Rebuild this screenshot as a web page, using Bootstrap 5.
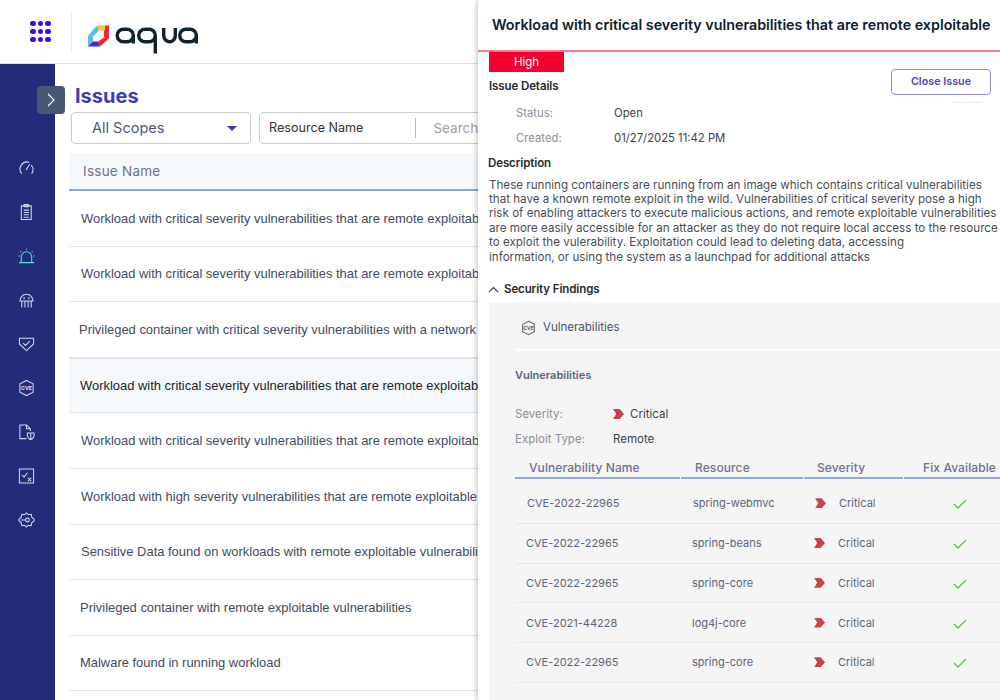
<!DOCTYPE html>
<html lang="en"><head><meta charset="utf-8"><title>Issues</title>
<link href="https://cdn.jsdelivr.net/npm/bootstrap@5.3.0/dist/css/bootstrap.min.css" rel="stylesheet">
<style>
html,body{width:1000px;height:700px;overflow:hidden;background:#fff;font-family:Inter,"Liberation Sans",sans-serif;color:#333}
.shell{position:relative;width:1000px;height:700px;overflow:hidden}
.topbar{height:64px;border-bottom:1px solid #ddd;padding-left:30px}
.dots{display:grid;grid-template-columns:repeat(3,5px);gap:2.5px;width:21px}
.dots i{width:5.5px;height:5.5px;border-radius:50%;background:#3a0fd8}
.vsep{width:1px;height:40px;background:#eceef1;margin:0 16px 0 20px}
.sidenav{width:55px;height:636px;background:#232b7b;padding-top:95px}
.sidenav svg{display:block;margin:0 0 26px 18px;width:17px;height:18px;fill:none;stroke:#d5d9ee;stroke-width:1.1}
.sidenav svg.on{stroke:#4fe3d8}
.toggler{position:absolute;left:37px;top:86px;width:28px;height:28px;background:#475873;border-radius:4px}
.contentpane{width:945px;height:636px;padding:0 0 0 14px}
.pagehead{font-size:20px;font-weight:700;color:#3d3cb8;line-height:24px;margin:20px 0 4px 6px}
.scopebox{width:180px;height:32px;margin-left:2px;border:1px solid #c9cbd0;border-radius:4px;padding-left:20px;font-size:14.5px;color:#4d5a78}
.caretdown{position:absolute;right:13px;top:13px;border-left:5px solid transparent;border-right:5px solid transparent;border-top:5px solid #3f37b5}
.searchbox{position:relative;width:240px;height:32px;border:1px solid #c9cbd0;border-radius:4px;margin-left:8px;padding-left:9px;font-size:12.6px;color:#333}
.searchsep{width:1px;height:20px;background:#bbb;margin:0 17px 0 52px}
.ghosttext{color:#9aa0aa;font-size:13.5px}
.listhead{margin-top:9px;height:38px;background:#f6f9fc;border-bottom:2px solid #8ea3d6;padding-left:14px;font-size:13.5px;color:#6f7480;line-height:37px;letter-spacing:.25px}
.issuerow{height:55.6px;border-bottom:1px solid #e3e4e7;font-family:"Liberation Sans",Arial,sans-serif;font-size:12.95px;color:#3f4b60;white-space:nowrap;overflow:hidden;padding-left:12px}
.issuerow.pick{background:#f6f9fc;color:#222;padding-left:11px;border-top:1px solid #e3e4e7}
.nudge{padding-left:10px}
.nudge1{padding-left:11px}
.drawer{position:absolute;left:478px;top:0;width:522px;height:700px;background:#fff;box-shadow:-2px 0 4px rgba(0,0,0,.18)}
.drawerhead{height:52px;border-bottom:2px solid #f77d8d;padding:0 0 1px 14px;font-size:14.3px;font-weight:600;color:#0e1c33;white-space:nowrap}
.sevtag{position:absolute;left:11px;top:52px;width:75px;height:20px;background:#f2002f;color:#fff;font-size:11.5px;line-height:20px;text-align:center}
.closebtn{position:absolute;left:413px;top:69px;width:100px;height:26px;border:1.5px solid #8f88e2;border-radius:4px;background:#fff;color:#5146c7;font-size:10.8px;font-weight:600;padding:0}
.btnghost{position:absolute;left:474px;top:102px;width:30px;height:1px;background:#e9ebf1}
.sechead{font-size:11.5px;font-weight:600;color:#27292e;letter-spacing:-.1px}
.chevup{margin-right:5px}
.kvrow{font-size:11.3px;line-height:14px;color:#3c4350}
.kvrow span:first-child{display:inline-block;width:98px;color:#8a8f99}
.desc{font-size:11.62px;line-height:14.45px;color:#4a4e56;padding:0 0 0 11px;margin:0;white-space:nowrap}
.findbox{position:absolute;left:11px;top:303px;width:511px;height:397px;background:#f5f5f5}
.vulnhead{margin-left:27px;height:48px;border-bottom:2px solid #fff;font-size:11.5px;color:#4a5464;padding:4px 0 0 5px}
.vulnhead svg{margin-right:7px}
.vulnlabel{font-size:11px;font-weight:600;color:#596579;margin:17px 0 0 26px;line-height:14px}
.vulnkv{font-size:11.5px;line-height:14px;color:#3c4350;margin-left:26px}
.vulnkv>span:first-child{display:inline-block;width:98px;color:#8a8f99}
.gridtbl{margin-left:26px;width:485px}
.gridhead{height:28px;font-size:12px;font-weight:500;color:#6b7487;letter-spacing:.1px}
.gridhead div{border-bottom:2px solid #94a8dc;margin-right:1px;padding-left:14px;line-height:23px;height:23px;white-space:nowrap}
.gridrow{height:39.8px;border-bottom:1px solid #e7e7e7;font-size:11px;color:#5c6678}
.gridrow.lead1 .c1,.gridrow.lead1 .c2{text-indent:-1px}
.gridrow.lead1 .c3{padding-left:11px}
.c1{width:166px;padding-left:12px}.c2{width:122px;padding-left:12px}.c3{width:102px;padding-left:12px}.c4{width:95px;padding-left:15px;text-align:center}
.chev{display:inline-block;width:11px;height:10px;background:#c8444a;clip-path:polygon(0 0,60% 0,100% 50%,60% 100%,0 100%,30% 50%);vertical-align:-1px}
.chevgap{margin-right:13px}
.chevgap2{margin-right:6px}
.tick{width:14px;height:12px;fill:none;stroke:#5cc94a;stroke-width:1.4}
</style></head><body>
<div class="shell">
 <header class="topbar d-flex align-items-center">
  <div class="dots"><i></i><i></i><i></i><i></i><i></i><i></i><i></i><i></i><i></i></div>
  <div class="vsep"></div>
  <svg width="112" height="44" viewBox="0 0 112 44" aria-label="aqua logo">
   <path d="M0 25.5 L5 26.5 V31.5 L0 36.5Z" fill="#58c0e8"/>
   <path d="M0 25.5 L9 15.5 L11 20.5 L5 26.5Z" fill="#58c0e8"/>
   <path d="M9 15.5 H17 V20.5 H11Z" fill="#f9c22e"/>
   <path d="M17 15.5 H21 V28.5 L16 27.5 V20.5 H17Z" fill="#e72b2d"/>
   <path d="M21 28.5 L12 36.5 L10 31.5 L16 27.5Z" fill="#e72b2d"/>
   <path d="M0 36.5 L5 31.5 H10 L12 36.5Z" fill="#4a22e0"/>
   <g fill="none" stroke="#10232f" stroke-width="3.4">
    <path d="M35.5 19.2 H39 a6.3 6.3 0 0 1 6.3 6.3 V33.5 M45.3 25.5 a6.3 6.3 0 0 1-6.3 6.3 H35.5 a6.3 6.3 0 0 1 0-12.6"/>
    <path d="M57 19.2 H61 a6.3 6.3 0 0 1 6.3 6.3 V43.5 M67.3 25.5 a6.3 6.3 0 0 1-6.3 6.3 H57 a6.3 6.3 0 0 1 0-12.6"/>
    <path d="M75.7 18 V25.5 a6.3 6.3 0 0 0 6.3 6.3 a5.3 6.3 0 0 0 5.3-6.3 V18"/>
    <path d="M98 19.2 H102 a6.3 6.3 0 0 1 6.3 6.3 V33.5 M108.3 25.5 a6.3 6.3 0 0 1-6.3 6.3 H98 a6.3 6.3 0 0 1 0-12.6"/>
   </g>
  </svg>
 </header>
 <div class="d-flex">
  <nav class="sidenav d-flex flex-column">
   <svg viewBox="0 0 18 18"><path d="M4 15 A7.5 7.5 0 0 1 12 3 M14 6 A7.5 7.5 0 0 1 14.5 15 M8.5 11 L12.5 5"/></svg>
   <svg viewBox="0 0 18 18"><path d="M3.5 2.5 H14 V17 H3.5Z M6.5 1 H11 V3.5 H6.5Z M6 7 H11.5 M6 9.5 H11.5 M6 12 H11.5 M6 14.5 H11.5"/></svg>
   <svg class="on" viewBox="0 0 18 18"><path d="M1 16 H17 M3.5 16 V10 A5.5 5.5 0 0 1 14.5 10 V16 M9 1 V2.5 M2.5 4 L3.5 5 M15.5 4 L14.5 5 M0.5 9 H2 M16 9 H17.5"/></svg>
   <svg viewBox="0 0 18 18"><path d="M2 10 A7 7 0 0 1 16 10 H2Z M4 10 V17 M7.3 10 V17 M10.7 10 V17 M14 10 V17"/><circle cx="6.5" cy="7" r=".4"/><circle cx="11.5" cy="7" r=".4"/></svg>
   <svg viewBox="0 0 18 18"><path d="M1.5 3 H16.5 V9 L9 16 L1.5 9Z M5.5 8 L8 10.5 L12.5 6"/></svg>
   <svg viewBox="0 0 18 18"><path d="M9 1 L16 4.5 V13.5 L9 17 L2 13.5 V4.5Z"/><text x="9" y="11" font-size="5.5" font-weight="700" text-anchor="middle" fill="#dfe3f4" stroke="none" font-family="Inter">CVE</text></svg>
   <svg viewBox="0 0 18 18"><path d="M9 16 H2 V1.5 H9 L13 5.5 V8 M9 1.5 V5.5 H13"/><path d="M10 10 H17 V13 Q16 16.5 13.5 17 Q11 16.5 10 13Z M13.5 10 V17"/></svg>
   <svg viewBox="0 0 18 18"><path d="M1.5 1.5 H16.5 V16.5 H1.5Z M4 8 L6.5 10 L10 5.5 M10.5 11 L14 14.5 M14 11 L10.5 14.5"/></svg>
   <svg viewBox="0 0 18 18"><path d="M9 1.5 L11 3.5 L14 3 L14.5 6 L17 8 V10 L14.5 12 L14 15 L11 14.5 L9 16.5 L7 14.5 L4 15 L3.5 12 L1 10 V8 L3.5 6 L4 3 L7 3.5Z"/><circle cx="10" cy="9" r="2"/><path d="M3 9 H8"/></svg>
  </nav>
  <main class="contentpane">
   <h1 class="pagehead">Issues</h1>
   <div class="d-flex">
    <div class="scopebox position-relative d-flex align-items-center">All Scopes<span class="caretdown"></span></div>
    <div class="searchbox d-flex align-items-center">Resource Name<span class="searchsep"></span><span class="ghosttext text-nowrap">Search</span></div>
   </div>
   <div class="listhead">Issue Name</div>
   <div class="issuerow d-flex align-items-center">Workload with critical severity vulnerabilities that are remote exploitable</div>
   <div class="issuerow d-flex align-items-center">Workload with critical severity vulnerabilities that are remote exploitable</div>
   <div class="issuerow nudge d-flex align-items-center">Privileged container with critical severity vulnerabilities with a network</div>
   <div class="issuerow pick d-flex align-items-center">Workload with critical severity vulnerabilities that are remote exploitable</div>
   <div class="issuerow d-flex align-items-center">Workload with critical severity vulnerabilities that are remote exploitable</div>
   <div class="issuerow d-flex align-items-center">Workload with high severity vulnerabilities that are remote exploitable</div>
   <div class="issuerow d-flex align-items-center">Sensitive Data found on workloads with remote exploitable vulnerabilities</div>
   <div class="issuerow nudge1 d-flex align-items-center">Privileged container with remote exploitable vulnerabilities</div>
   <div class="issuerow nudge1 d-flex align-items-center">Malware found in running workload</div>
  </main>
 </div>
 <div class="toggler d-flex align-items-center justify-content-center"><svg width="10" height="14" viewBox="0 0 10 14" fill="none" stroke="#fff" stroke-width="1.2"><path d="M2 1 L8 7 L2 13"/></svg></div>
 <aside class="drawer">
  <div class="drawerhead d-flex align-items-center">Workload with critical severity vulnerabilities that are remote exploitable</div>
  <div class="sevtag">High</div>
  <button class="closebtn" type="button">Close Issue</button>
  <div class="btnghost"></div>
  <div class="sechead" style="margin:26px 0 0 11px">Issue Details</div>
  <div class="kvrow" style="margin:11px 0 0 38px"><span>Status:</span><span>Open</span></div>
  <div class="kvrow" style="margin:11px 0 0 38px"><span>Created:</span><span>01/27/2025 11:42 PM</span></div>
  <div class="sechead" style="margin:10px 0 5px 10px">Description</div>
  <p class="desc">These running containers are running from an image which contains critical vulnerabilities<br>that have a known remote exploit in the wild. Vulnerabilities of critical severity pose a high<br>risk of enabling attackers to execute malicious actions, and remote exploitable vulnerabilities<br>are more easily accessible for an attacker as they do not require local access to the resource<br>to exploit the vulerability. Exploitation could lead to deleting data, accessing<br>information, or using the system as a launchpad for additional attacks</p>
  <div class="sechead d-flex align-items-center" style="margin:17px 0 0 10px"><svg width="11" height="7" viewBox="0 0 11 7" fill="none" stroke="#444" stroke-width="1.1" class="chevup"><path d="M1 6 L5.5 1.5 L10 6"/></svg>Security Findings</div>
  <div class="findbox">
   <div class="vulnhead d-flex align-items-center"><svg width="15" height="16" viewBox="0 0 18 18" fill="none" stroke="#666" stroke-width="1.3"><path d="M9 1 L16 4.5 V13.5 L9 17 L2 13.5 V4.5Z"/><text x="9" y="11" font-size="6" font-weight="700" text-anchor="middle" fill="#555" stroke="none" font-family="Inter">CVE</text></svg>Vulnerabilities</div>
   <div class="vulnlabel">Vulnerabilities</div>
   <div class="vulnkv" style="margin-top:25px"><span>Severity:</span><span class="chev chevgap2"></span><span>Critical</span></div>
   <div class="vulnkv" style="margin-top:11px"><span>Exploit Type:</span><span>Remote</span></div>
   <div class="gridtbl" style="margin-top:10px">
    <div class="gridhead d-flex"><div class="flex-shrink-0" style="width:165px">Vulnerability Name</div><div class="flex-shrink-0" style="width:122px">Resource</div><div class="flex-shrink-0" style="width:99px;padding-left:13px">Severity</div><div class="flex-shrink-0" style="width:96px;padding-left:19px">Fix Available</div></div>
    <div class="gridrow d-flex align-items-center"><div class="c1">CVE-2022-22965</div><div class="c2">spring-webmvc</div><div class="c3"><span class="chev chevgap"></span>Critical</div><div class="c4"><svg class="tick" viewBox="0 0 14 12"><path d="M1 6 L5 10 L13 2"/></svg></div></div>
    <div class="gridrow lead1 d-flex align-items-center"><div class="c1">CVE-2022-22965</div><div class="c2">spring-beans</div><div class="c3"><span class="chev chevgap"></span>Critical</div><div class="c4"><svg class="tick" viewBox="0 0 14 12"><path d="M1 6 L5 10 L13 2"/></svg></div></div>
    <div class="gridrow lead1 d-flex align-items-center"><div class="c1">CVE-2022-22965</div><div class="c2">spring-core</div><div class="c3"><span class="chev chevgap"></span>Critical</div><div class="c4"><svg class="tick" viewBox="0 0 14 12"><path d="M1 6 L5 10 L13 2"/></svg></div></div>
    <div class="gridrow lead1 d-flex align-items-center"><div class="c1">CVE-2021-44228</div><div class="c2">log4j-core</div><div class="c3"><span class="chev chevgap"></span>Critical</div><div class="c4"><svg class="tick" viewBox="0 0 14 12"><path d="M1 6 L5 10 L13 2"/></svg></div></div>
    <div class="gridrow lead1 d-flex align-items-center"><div class="c1">CVE-2022-22965</div><div class="c2">spring-core</div><div class="c3"><span class="chev chevgap"></span>Critical</div><div class="c4"><svg class="tick" viewBox="0 0 14 12"><path d="M1 6 L5 10 L13 2"/></svg></div></div>
   </div>
  </div>
 </aside>
</div>
</body></html>
